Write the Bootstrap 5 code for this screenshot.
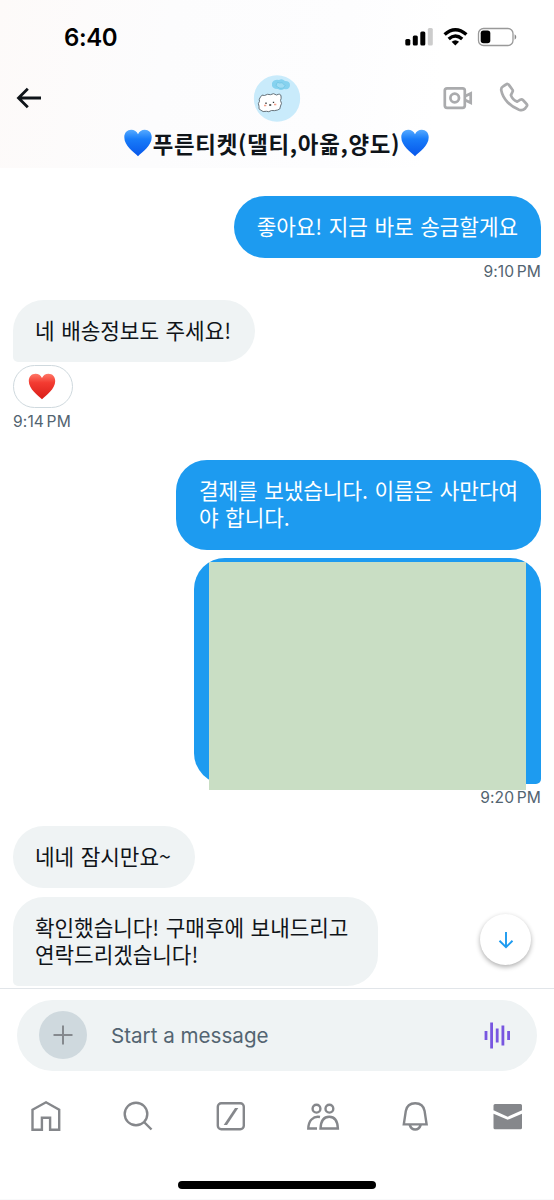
<!DOCTYPE html>
<html lang="ko">
<head>
<meta charset="utf-8">
<meta name="viewport" content="width=device-width, initial-scale=1">
<title>Messages</title>
<link href="https://cdn.jsdelivr.net/npm/bootstrap@5.3.0/dist/css/bootstrap.min.css" rel="stylesheet">
<style>
body{font-family:Inter,"Noto Sans CJK KR",sans-serif;color:#0f1419;background:#fff}
svg{display:block;flex:none}
.screen{width:554px;height:1200px}
.top-area{height:168px;background:linear-gradient(100deg,#fdfaf9 0,#fcfcfd 30%,#fdfdfe 60%,#fff 78%)}
.status{height:74px;padding:0 37px 0 64px}
.clock{font-size:24px;font-weight:600;color:#000;letter-spacing:-.4px;line-height:30px;padding-top:1px}
.tools{height:48px;padding:0 25px 0 16px}
.title-row{height:42px;gap:1px;padding-right:1px}
.title-text{font:700 22.4px/34px "Noto Sans CJK KR",sans-serif;white-space:nowrap;letter-spacing:.72px;margin-top:-1px}
.chat{height:820px;padding:28px 13px 0}
.bubble{font:400 21.3px/27px "Noto Sans CJK KR",sans-serif;word-spacing:.7px;letter-spacing:-.04px;padding:16px 23px 19px;min-height:62px;border-radius:31px;white-space:nowrap}
.mine{background:#1d9bf0;color:#fff}
.theirs{background:#eff3f4;padding-left:22px;padding-right:24px}
.tail-end{border-bottom-right-radius:5px}
.tail-start{border-bottom-left-radius:5px}
.stamp{font-size:15.6px;line-height:20px;color:#536471;word-spacing:-2px;letter-spacing:.12px}
.reaction{width:60px;height:43px;border:1px solid #cfd9de;border-radius:22px;padding-right:2px}
.photo{width:347px;height:226px;padding:4px 15px 0}
.photo-fill{height:228px;background:#c9dec4}
.jump{position:absolute;right:23px;top:746px;width:51px;height:51px;background:#fff;box-shadow:0 2px 5px rgba(0,0,0,.32)}
.composer{height:82px;border-top:1px solid #e1e5e9;padding:11px 17px 0}
.field{height:71px;border-radius:36px;background:#eff3f4;padding:0 26px 1px 22px}
.plus{width:48px;height:48px;background:#cfd9de}
.hint{font-size:20.6px;color:#536471;margin-left:24px;padding-top:2px}
.tabs{height:92px;padding:0 24px}
.home-bar{width:198px;height:8px;border-radius:4px;background:#000;margin-top:19px}
</style>
</head>
<body>
<div class="screen position-relative overflow-hidden d-flex flex-column">
<header class="top-area">
  <div class="status d-flex align-items-center justify-content-between">
    <span class="clock">6:40</span>
    <svg width="112" height="22" viewBox="405 26 112 22">
      <g><rect x="405.3" y="39" width="5" height="6.5" rx="1.5"/><rect x="412.8" y="35.500" width="5" height="10" rx="1.500"/><rect x="420.300" y="31.500" width="5" height="14" rx="1.500"/><rect x="427.800" y="28" width="5" height="17.500" rx="1.500" fill="#ccc"/></g>
      <g fill="none" stroke="#000" stroke-width="3.400"><path d="M444.600 34.500Q455.300 24.800 466.400 34.500M448.700 39Q455.300 33 462.200 39"/></g><path d="M451.600 41.700Q455.300 38.700 459.100 41.700L455.300 45.500Z"/>
      <rect x="478.500" y="28.500" width="34.500" height="17" rx="5" fill="none" stroke="#999" stroke-width="1.300"/><rect x="480.700" y="30.500" width="9.600" height="12.800" rx="2.800"/><path d="M514.600 34.300Q518 37 514.600 39.800Z" fill="#888"/>
    </svg>
  </div>
  <div class="tools d-flex align-items-center justify-content-between position-relative">
    <svg width="26" height="24" viewBox="16 86 26 24" fill="none" stroke="#0f1419" stroke-width="2.800"><path d="M18.500 98H41M27.800 88.700 18.500 98l9.300 9.300"/></svg>
    <svg width="47" height="47" viewBox="0 0 47 47" class="position-absolute start-50 translate-middle-x">
      <circle cx="23.500" cy="23.500" r="23.200" fill="#c9ebfb"/><path d="M18.500 8q2-4 7-3 3-2 6 1 5 0 5 4 0 5-6 4-3 2-6 0-7 0-6-6Z" fill="#86d2ef"/><path d="M23 9q1-3 3-1 3-1 4 1 3 1 0 4-4 1-6-1-2-1-1-3Z" fill="#9fdcf3" stroke="#62bddf" stroke-width=".6"/>
      <path d="M7 22q1-3 4-1.500 3-2 6-.8 3-2.200 6 .3 4-2 4.500 1 .5 2.500-.5 4.500 2 3 0 5.500 0 4-3 4-3 1-6 .5-3 2-5 .8-4 1-5.500-1-3-1-2-4-1.500-3 .500-5-1-2 1-4.300Z" fill="#fff" stroke="#56636c" stroke-width=".9"/><path d="M12.500 27.500v1.400M20 26.700v1.400M15.700 30h2" stroke="#333" stroke-width="1.300"/><path d="M10.500 30.500h2.300M20.500 29.500h2.300" stroke="#f2a08c" stroke-width="1.500"/>
    </svg>
    <svg width="86" height="32" viewBox="443 82 86 32" fill="none" stroke="#aaabad" stroke-width="2.700">
      <rect x="444.800" y="88.300" width="20" height="19.500" rx="2.300"/><circle cx="454.700" cy="98" r="4.300"/><path d="M465 96.300 470.700 93.500v9.300L465 100"/>
      <path stroke-linejoin="round" d="M506 84.500c1.100-.8 2.100-.7 2.900.4l3.400 4.600c.7.900.7 1.700.1 2.600l-1.500 3c1.100 3.200 3.300 5.500 6.300 6.500l3.200-1.900c.9-.5 1.700-.5 2.500.3l3.500 3.700c.9.900 1 1.800.2 2.800l-1.800 2.300c-1.500 1.500-3.500 1.700-5.800.9C510.500 106.500 503 99.300 501.300 90.500c-.4-2 .2-3.200 1.800-4.100Z"/>
    </svg>
  </div>
  <div class="title-row d-flex justify-content-center align-items-center">
    <svg width="28" height="28" viewBox="0 0 28 28"><defs><linearGradient id="blueHeart" x2="0" y2="1"><stop stop-color="#55aaff"/><stop offset=".35" stop-color="#187cf9"/><stop offset="1" stop-color="#0756ea"/></linearGradient></defs><path d="M14 27.300C10 23 .3 17 .3 8.300.3 3.700 3.300.8 7.200.8c3.200 0 5.500 1.600 6.800 4.500C15.300 2.400 17.600.8 20.800.8c3.900 0 6.900 2.900 6.900 7.500C27.700 17 18 23 14 27.300Z" fill="url(#blueHeart)"/></svg>
    <span class="title-text">푸른티켓(댈티,아옮,양도)</span>
    <svg width="28" height="28" viewBox="0 0 28 28"><path d="M14 27.300C10 23 .3 17 .3 8.300.3 3.700 3.300.8 7.200.8c3.200 0 5.500 1.600 6.800 4.500C15.300 2.400 17.600.8 20.800.8c3.900 0 6.900 2.900 6.900 7.500C27.700 17 18 23 14 27.300Z" fill="url(#blueHeart)"/></svg>
  </div>
</header>

<main class="chat position-relative d-flex flex-column">
  <div class="d-flex flex-column align-items-end">
    <div class="bubble mine tail-end">좋아요! 지금 바로 송금할게요</div>
    <div class="stamp mt-1">9:10 PM</div>
  </div>
  <div class="d-flex flex-column align-items-start" style="margin-top:18px">
    <div class="bubble theirs tail-start">네 배송정보도 주세요!</div>
    <div class="reaction bg-white d-flex align-items-center justify-content-center" style="margin-top:3px">
      <svg width="28" height="27" viewBox="0 0 28 28"><defs><linearGradient id="redHeart" x2="0" y2="1"><stop stop-color="#ff7868"/><stop offset=".35" stop-color="#f33b31"/><stop offset="1" stop-color="#d91d18"/></linearGradient></defs><path d="M14 27.300C10 23 .3 17 .3 8.300.3 3.700 3.300.8 7.200.8c3.200 0 5.500 1.600 6.800 4.500C15.300 2.400 17.600.8 20.800.8c3.900 0 6.900 2.900 6.900 7.500C27.700 17 18 23 14 27.300Z" fill="url(#redHeart)"/></svg>
    </div>
    <div class="stamp mt-1">9:14 PM</div>
  </div>
  <div class="d-flex flex-column align-items-end" style="margin-top:28px">
    <div class="bubble mine" style="height:90px">결제를 보냈습니다. 이름은 사만다여<br>야 합니다.</div>
    <div class="bubble mine tail-end photo mt-2"><div class="photo-fill"></div></div>
    <div class="stamp mt-1">9:20 PM</div>
  </div>
  <div class="d-flex flex-column align-items-start" style="margin-top:18px">
    <div class="bubble theirs">네네 잠시만요~</div>
    <div class="bubble theirs tail-start" style="margin-top:9px;width:365px">확인했습니다! 구매후에 보내드리고<br>연락드리겠습니다!</div>
  </div>
  <div class="jump rounded-circle d-flex align-items-center justify-content-center"><svg width="16" height="18" viewBox="0 0 16 18" fill="none" stroke="#1d9bf0" stroke-width="1.900"><path d="M8 1v15M1.500 9.800 8 16.200l6.500-6.400"/></svg></div>
</main>

<div class="composer">
  <div class="field d-flex align-items-center">
    <div class="plus rounded-circle d-flex align-items-center justify-content-center"><svg width="20" height="20" viewBox="0 0 20 20" stroke="#85898e" stroke-width="2"><path d="M10 .5v19M.5 10h19"/></svg></div>
    <span class="hint">Start a message</span>
    <svg class="ms-auto" width="27" height="27" viewBox="0 0 27 27" stroke="#7856e0" stroke-width="2.800"><path d="M2 9v9M7.600.5v26M13.200 6.500v14M18.900 3.500v20M24.600 9v9"/></svg>
  </div>
</div>
<nav class="tabs d-flex align-items-center justify-content-between">
  <svg width="44" height="34" viewBox="24 1099 44 34" fill="none" stroke="#85878b" stroke-width="2.400"><path d="M32.500 1109.800 46 1102.300l13.200 7.500v20H50.100v-12h-8.200v12h-9.400Z"/></svg>
  <svg width="44" height="34" viewBox="116 1099 44 34" fill="none" stroke="#85878b" stroke-width="2.400"><circle cx="136" cy="1114" r="11.300"/><path d="m144 1122 7.500 7.500"/></svg>
  <svg width="44" height="34" viewBox="209 1099 44 34" fill="none" stroke="#85878b" stroke-width="2.400"><rect x="217.800" y="1103.300" width="26" height="26" rx="3.500"/><path d="M235 1108h3.300L227 1125h-3.300Z" fill="#85878b" stroke="none"/></svg>
  <svg width="44" height="34" viewBox="301 1099 44 34" fill="none" stroke="#85878b" stroke-width="2.400"><circle cx="316.500" cy="1108.700" r="3.900"/><circle cx="329.400" cy="1108.700" r="3.900"/><path d="M320 1117q-5-1-8.500 2.500-3 3-3.200 9H317M320.500 1128.500h17.400q-.5-11.800-8.700-11.800t-8.700 11.800Z"/></svg>
  <svg width="44" height="34" viewBox="394 1099 44 34" fill="none" stroke="#85878b" stroke-width="2.400"><path d="M403.800 1124.400 405.800 1111q1.400-7.800 9.400-7.800t9.400 7.800l2 13.400ZM409.700 1125q1.500 4.500 5.500 4.500t5.500-4.500"/></svg>
  <svg width="44" height="34" viewBox="486 1099 44 34" fill="#85878b"><path d="M493.500 1105.500q0-1.500 1.500-1.500h25.500q1.500 0 1.500 1.500v4.800l-14.300 6.400-14.200-6.400ZM493.500 1113.800l14.200 6 14.300-6v14q0 1.500-1.500 1.500H495q-1.500 0-1.500-1.500Z"/></svg>
</nav>
<div class="home-bar mx-auto flex-shrink-0"></div>
<div class="mt-auto border-bottom border-light"></div>
</div>
<script src="https://cdn.jsdelivr.net/npm/bootstrap@5.3.0/dist/js/bootstrap.bundle.min.js"></script>
</body>
</html>
